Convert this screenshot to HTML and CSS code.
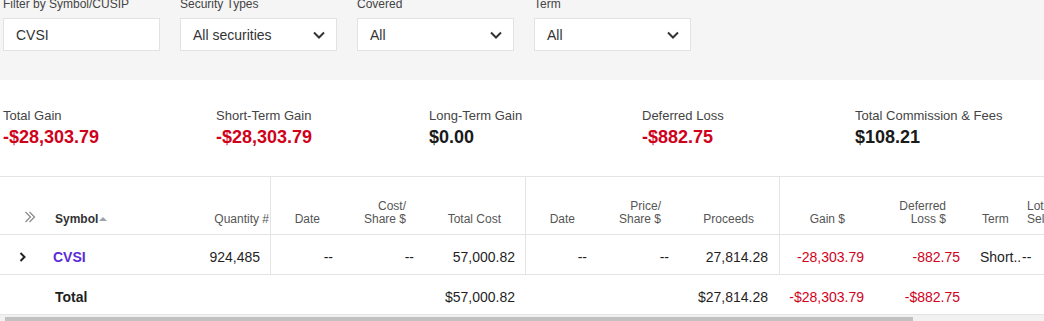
FILE: index.html
```html
<!DOCTYPE html>
<html lang="en">
<head>
    <meta charset="UTF-8">
    <meta name="viewport" content="width=device-width, initial-scale=1.0">
    <title>Realized Gain/Loss</title>
    <link rel="stylesheet" href="styles.css">
</head>

<body>
    <div class="filters">
        <div class="filter">
            <label class="filter-label">Filter by Symbol/CUSIP</label>
            <div class="filter-box">CVSI</div>
        </div>
        <div class="filter">
            <label class="filter-label">Security Types</label>
            <div class="filter-box">All securities
                <svg class="chevron" width="12" height="8" viewBox="0 0 12 8"><path d="M1 1.5l5 5 5-5" /></svg>
            </div>
        </div>
        <div class="filter">
            <label class="filter-label">Covered</label>
            <div class="filter-box">All
                <svg class="chevron" width="12" height="8" viewBox="0 0 12 8"><path d="M1 1.5l5 5 5-5" /></svg>
            </div>
        </div>
        <div class="filter">
            <label class="filter-label">Term</label>
            <div class="filter-box">All
                <svg class="chevron" width="12" height="8" viewBox="0 0 12 8"><path d="M1 1.5l5 5 5-5" /></svg>
            </div>
        </div>
    </div>

    <div class="summary">
        <div class="stat">
            <div class="stat-label">Total Gain</div>
            <div class="stat-value neg">-$28,303.79</div>
        </div>
        <div class="stat">
            <div class="stat-label">Short-Term Gain</div>
            <div class="stat-value neg">-$28,303.79</div>
        </div>
        <div class="stat">
            <div class="stat-label">Long-Term Gain</div>
            <div class="stat-value">$0.00</div>
        </div>
        <div class="stat">
            <div class="stat-label">Deferred Loss</div>
            <div class="stat-value neg">-$882.75</div>
        </div>
        <div class="stat">
            <div class="stat-label">Total Commission &amp; Fees</div>
            <div class="stat-value">$108.21</div>
        </div>
    </div>

    <div class="table-wrap">
        <table class="lots">
            <colgroup>
                <col style="width:45px"><col style="width:145px"><col style="width:80px">
                <col style="width:75px"><col style="width:75px"><col style="width:105px">
                <col style="width:75px"><col style="width:75px"><col style="width:104px">
                <col style="width:91px"><col style="width:95px"><col style="width:55px">
                <col style="width:80px">
            </colgroup>
            <thead>
                <tr>
                    <th class="c-expand">
                        <svg class="expand-all" width="12" height="12" viewBox="0 0 12 12"><path d="M1.5 1l5 5-5 5M5.5 1l5 5-5 5" /></svg>
                    </th>
                    <th class="c-symbol">Symbol<span class="sort-up"></span></th>
                    <th class="c-qty">Quantity #</th>
                    <th class="c-date sep">Date</th>
                    <th class="c-cps">Cost/<br>Share $</th>
                    <th class="c-cost">Total Cost</th>
                    <th class="c-date2 sep">Date</th>
                    <th class="c-pps">Price/<br>Share $</th>
                    <th class="c-proc">Proceeds</th>
                    <th class="c-gain sep">Gain $</th>
                    <th class="c-def">Deferred<br>Loss $</th>
                    <th class="c-term">Term</th>
                    <th class="c-lot">Lot Selection</th>
                </tr>
            </thead>
            <tbody>
                <tr>
                    <td class="c-expand">
                        <svg class="expand" width="8" height="10" viewBox="0 0 8 10"><path d="M1.5 1l4 4-4 4" /></svg>
                    </td>
                    <td class="c-symbol"><a class="symbol" href="#">CVSI</a></td>
                    <td class="c-qty">924,485</td>
                    <td class="c-date sep">--</td>
                    <td class="c-cps">--</td>
                    <td class="c-cost">57,000.82</td>
                    <td class="c-date2 sep">--</td>
                    <td class="c-pps">--</td>
                    <td class="c-proc">27,814.28</td>
                    <td class="c-gain sep neg">-28,303.79</td>
                    <td class="c-def neg">-882.75</td>
                    <td class="c-term">Short..</td>
                    <td class="c-lot">--</td>
                </tr>
                <tr class="total">
                    <td class="c-expand"></td>
                    <td class="c-symbol">Total</td>
                    <td class="c-qty"></td>
                    <td class="c-date"></td>
                    <td class="c-cps"></td>
                    <td class="c-cost">$57,000.82</td>
                    <td class="c-date2"></td>
                    <td class="c-pps"></td>
                    <td class="c-proc">$27,814.28</td>
                    <td class="c-gain neg">-$28,303.79</td>
                    <td class="c-def neg">-$882.75</td>
                    <td class="c-term"></td>
                    <td class="c-lot"></td>
                </tr>
            </tbody>
        </table>
    </div>

    <div class="scrollbar"><div class="scrollbar-thumb"></div></div>
</body>
</html>
```

FILE: styles.css
```css
body {
    margin: 0;
    height: 321px;
    overflow: hidden;
    background-color: #fff;
    color: #1f1f1f;
    font-family: "Liberation Sans", Arial, sans-serif;
}

/* Filtros */
.filters {
    display: flex;
    gap: 20px;
    height: 80px;
    padding: 0 3px;
    box-sizing: border-box;
    background-color: #f5f5f5;
}
.filter {
    width: 157px;
}
.filter-label {
    display: block;
    margin-top: -3px;
    margin-bottom: 6px;
    font-size: 12px;
    line-height: 15px;
    color: #444;
}
.filter-box {
    display: flex;
    align-items: center;
    justify-content: space-between;
    height: 33px;
    box-sizing: border-box;
    padding: 0 11px 0 12px;
    border: 1px solid #e2e2e2;
    background-color: #fff;
    font-size: 14px;
    color: #333;
}
.chevron path {
    fill: none;
    stroke: #333;
    stroke-width: 2;
}

/* Resumo */
.summary {
    display: flex;
    padding: 28px 3px 28px;
}
.stat {
    flex-shrink: 0;
    width: 213px;
}
.stat-label {
    font-size: 13px;
    line-height: 16px;
    color: #444;
}
.stat-value {
    margin-top: 3px;
    font-size: 18px;
    line-height: 21px;
    font-weight: bold;
    color: #1a1a1a;
}
.neg,
.stat-value.neg {
    color: #d0021b;
}

/* Tabela */
.table-wrap {
    width: 100%;
    overflow: hidden;
}
.lots {
    width: 1100px;
    table-layout: fixed;
    border-collapse: separate;
    border-spacing: 0;
}
.lots th,
.lots td {
    box-sizing: border-box;
    padding: 0;
    border-bottom: 1px solid #e4e4e4;
    text-align: right;
    white-space: nowrap;
    overflow: hidden;
}
.lots th {
    height: 59px;
    padding-bottom: 8px;
    border-top: 1px solid #e4e4e4;
    vertical-align: bottom;
    font-size: 12px;
    line-height: 13px;
    font-weight: normal;
    color: #555;
}
.lots td {
    height: 40px;
    padding-top: 4px;
    vertical-align: middle;
    font-size: 14px;
}
.lots .sep {
    border-left: 1px solid #e4e4e4;
}
.total td {
    color: #1f1f1f;
}
.total td.neg {
    color: #d0021b;
}

.c-expand {
    text-align: left !important;
}
th.c-expand {
    padding-left: 24px !important;
}
td.c-expand {
    padding-left: 19px !important;
}
.expand-all path {
    fill: none;
    stroke: #888;
    stroke-width: 1.2;
}
.expand path {
    fill: none;
    stroke: #222;
    stroke-width: 2;
}

.lots .c-symbol {
    text-align: left;
    padding-left: 10px;
}
th.c-symbol {
    font-weight: bold !important;
    color: #333 !important;
}
.total .c-symbol {
    font-weight: bold;
}
.sort-up {
    display: inline-block;
    margin-left: 1px;
    margin-bottom: 2px;
    border-left: 4px solid transparent;
    border-right: 4px solid transparent;
    border-bottom: 4px solid #9aa4a8;
}
.symbol {
    margin-left: -2px;
    color: #5b2bd8;
    font-weight: bold;
    text-decoration: none;
}

th.c-qty { padding-right: 1px; }
td.c-qty { padding-right: 10px; }
th.c-date { padding-right: 25px; }
td.c-date { padding-right: 12px; }
th.c-cps { padding-right: 14px; }
td.c-cps { padding-right: 6px; }
th.c-cost { padding-right: 24px; }
td.c-cost { padding-right: 10px; }
th.c-date2 { padding-right: 25px; }
td.c-date2 { padding-right: 13px; }
th.c-pps { padding-right: 14px; }
td.c-pps { padding-right: 6px; }
th.c-proc { padding-right: 25px; }
td.c-proc { padding-right: 11px; }
th.c-gain { padding-right: 25px; }
td.c-gain { padding-right: 6px; }
th.c-def { padding-right: 19px; }
td.c-def { padding-right: 5px; }

.lots .c-term {
    text-align: left;
}
th.c-term { padding-left: 17px; }
td.c-term { padding-left: 15px; }
.lots .c-lot {
    text-align: left;
    white-space: normal;
}
th.c-lot { padding-left: 7px; padding-right: 30px; }
td.c-lot { padding-left: 2px; }

/* Barra de rolagem */
.scrollbar {
    height: 10px;
    background-color: #f1f1f1;
    padding-top: 2px;
    box-sizing: border-box;
}
.scrollbar-thumb {
    width: 908px;
    height: 8px;
    margin-left: 5px;
    background-color: #c1c1c1;
}
```
